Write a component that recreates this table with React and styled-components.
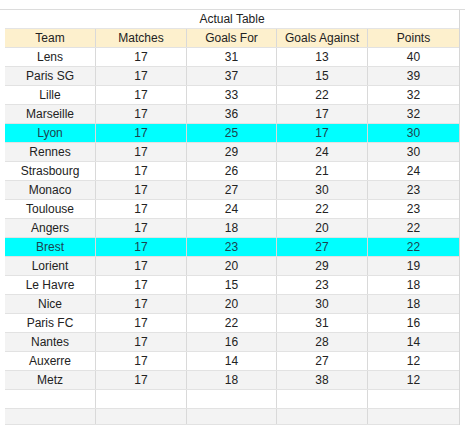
import React from "react";
import styled, { createGlobalStyle } from "styled-components";

const GlobalStyle = createGlobalStyle`
  html, body {
    margin: 0;
    padding: 0;
    background: #fff;
  }
  body {
    font-family: "Liberation Sans", Arial, sans-serif;
    font-size: 12px;
    color: #222;
  }
`;

const Page = styled.div`
  width: 465px;
  height: 429px;
  overflow: hidden;
  padding-top: 9px;
  box-sizing: border-box;
`;

const Sheet = styled.div`
  padding-left: 5px;
  width: 465px;
  border-top: 1px solid #dcdcdc;
  box-sizing: border-box;
`;

const Grid = styled.div`
  width: 455px;
  border-right: 1px solid #d6d6d6;
  box-sizing: border-box;
`;

const TitleRow = styled.div`
  height: 18px;
  line-height: 18px;
  text-align: center;
  background: #fff;
  border-bottom: 1px solid #e4e4e4;
`;

const Row = styled.div`
  display: grid;
  grid-template-columns: 91px 91px 90px 91px 91px;
  height: ${(p) => p.$h || 19}px;
  background: ${(p) => p.$bg};
  color: ${(p) => p.$fg || "#222"};
  box-sizing: border-box;
  border-bottom: 1px solid #e2e2e2;
`;

const Cell = styled.div`
  display: flex;
  align-items: center;
  justify-content: center;
  border-right: 1px solid #d9d9d9;
  white-space: nowrap;
  &:last-child {
    border-right: none;
  }
`;

const teams = [
  ["Lens", 17, 31, 13, 40],
  ["Paris SG", 17, 37, 15, 39],
  ["Lille", 17, 33, 22, 32],
  ["Marseille", 17, 36, 17, 32],
  ["Lyon", 17, 25, 17, 30],
  ["Rennes", 17, 29, 24, 30],
  ["Strasbourg", 17, 26, 21, 24],
  ["Monaco", 17, 27, 30, 23],
  ["Toulouse", 17, 24, 22, 23],
  ["Angers", 17, 18, 20, 22],
  ["Brest", 17, 23, 27, 22],
  ["Lorient", 17, 20, 29, 19],
  ["Le Havre", 17, 15, 23, 18],
  ["Nice", 17, 20, 30, 18],
  ["Paris FC", 17, 22, 31, 16],
  ["Nantes", 17, 16, 28, 14],
  ["Auxerre", 17, 14, 27, 12],
  ["Metz", 17, 18, 38, 12],
];

const highlighted = ["Lyon", "Brest"];

const rowBg = (i, name) => {
  if (highlighted.includes(name)) return "#00ffff";
  return i % 2 === 1 ? "#f3f3f3" : "#ffffff";
};

const App = () => {
  return (
    <>
      <GlobalStyle />
      <Page>
        <Sheet>
          <Grid>
            <TitleRow>Actual Table</TitleRow>
            <Row $bg="#fdf0cd">
              {["Team", "Matches", "Goals For", "Goals Against", "Points"].map((h) => (
                <Cell key={h}>{h}</Cell>
              ))}
            </Row>
            {teams.map((t, i) => (
              <Row key={t[0]} $bg={rowBg(i, t[0])} $fg={highlighted.includes(t[0]) ? "#1c4450" : undefined}>
                {t.map((v, j) => (
                  <Cell key={j}>{v}</Cell>
                ))}
              </Row>
            ))}
            <Row $bg="#ffffff">
              {[0, 1, 2, 3, 4].map((k) => (
                <Cell key={k} />
              ))}
            </Row>
            <Row $bg="#f3f3f3" $h={16}>
              {[0, 1, 2, 3, 4].map((k) => (
                <Cell key={k} />
              ))}
            </Row>
          </Grid>
        </Sheet>
      </Page>
    </>
  );
};

export default App;
